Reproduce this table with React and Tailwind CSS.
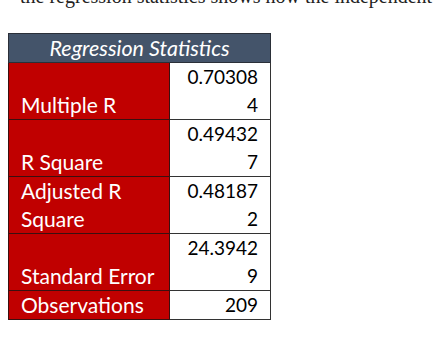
import React from 'react'

const rows = [
  { label: ['Multiple R'], value: ['0.70308', '4'] },
  { label: ['R Square'], value: ['0.49432', '7'] },
  { label: ['Adjusted R', 'Square'], value: ['0.48187', '2'] },
  { label: ['Standard Error'], value: ['24.3942', '9'] },
  { label: ['Observations'], value: ['209'] },
]

const App = () => {
  return (
    <div className="w-[446px] h-[358px] bg-white overflow-hidden">
      <p className="-mt-[15px] pl-[20px] whitespace-nowrap text-[20px] leading-[22px] text-[#222]" style={{ fontFamily: '"Liberation Serif", serif' }}>
        the regression statistics shows how the independent
      </p>
      <table
        className="mt-[26px] ml-[8px] w-[263px] border-collapse text-[19px] leading-[28px]"
        style={{ fontFamily: 'Lato, "Open Sans", sans-serif' }}
      >
        <thead>
          <tr>
            <th colSpan={2} className="h-[28px] bg-[#44546a] border border-[#2a2f38] text-white text-[21.5px] italic font-normal text-center p-0">
              Regression Statistics
            </th>
          </tr>
        </thead>
        <tbody>
          {rows.map((r) => (
            <tr key={r.label.join(' ')}>
              <td className="w-[161px] bg-[#c00000] text-white text-[21px] align-bottom pl-[12px] p-0 border border-[#3a1010]">
                {r.label.map((l) => (
                  <div key={l}>{l}</div>
                ))}
              </td>
              <td className="bg-white text-black text-right align-bottom pr-[12px] p-0 border border-[#333]">
                {r.value.map((v) => (
                  <div key={v}>{v}</div>
                ))}
              </td>
            </tr>
          ))}
        </tbody>
      </table>
    </div>
  )
}

export default App
